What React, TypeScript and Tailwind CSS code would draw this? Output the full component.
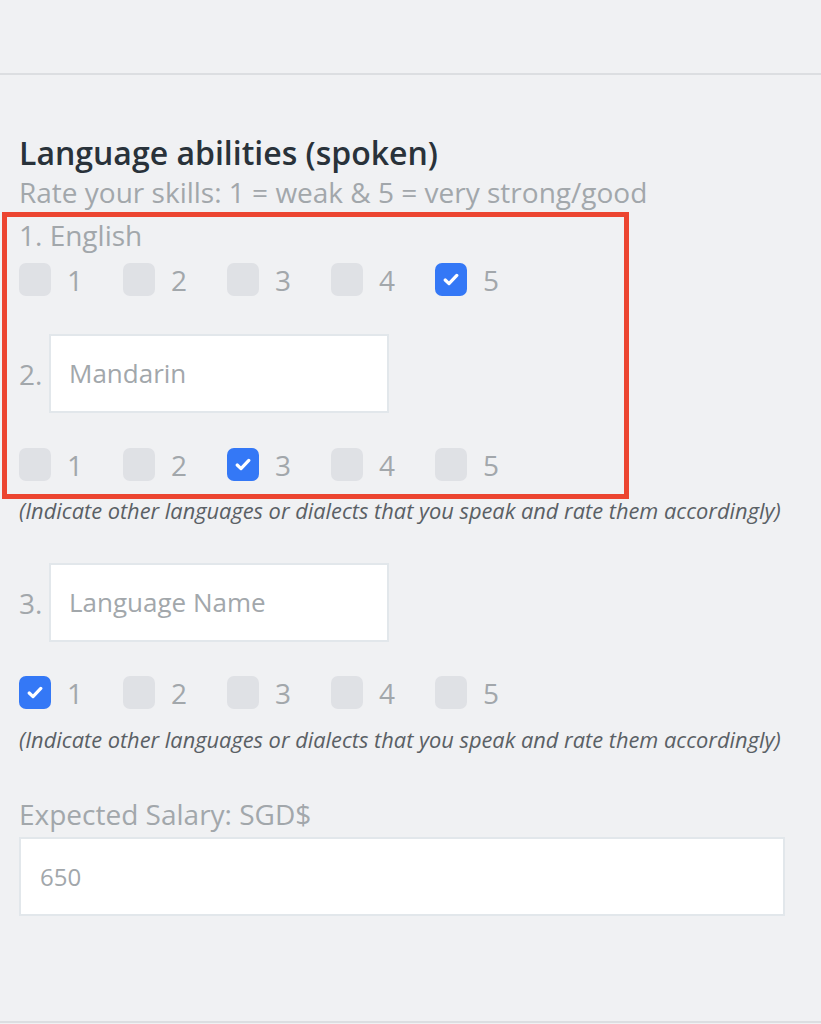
const font = "font-['Open_Sans',sans-serif]"

function Check() {
  return (
    <svg width="16" height="13" viewBox="0 0 16 13" fill="none">
      <path d="M2.2 7 L6 10.6 L13.8 2.4" stroke="white" strokeWidth="3.2" strokeLinecap="round" strokeLinejoin="round" />
    </svg>
  )
}

function Rating({ value }: { value: number }) {
  return (
    <div className="flex items-center">
      {[1, 2, 3, 4, 5].map((n) => (
        <div key={n} className="flex w-[104px] items-center gap-[16px]">
          {n === value ? (
            <div className="flex h-[33px] w-[32px] items-center justify-center rounded-[7px] bg-[#3478f6]">
              <Check />
            </div>
          ) : (
            <div className="h-[33px] w-[32px] rounded-[7px] bg-[#dfe1e5]" />
          )}
          <span className="text-[28px] leading-none text-[#a2a7ab]">{n}</span>
        </div>
      ))}
    </div>
  )
}

function NamedInput({ num, placeholder }: { num: string; placeholder: string }) {
  return (
    <div className="flex items-center gap-[7px]">
      <span className="w-[23px] text-[28px] text-[#a2a7ab]">{num}</span>
      <div className="flex h-[79px] w-[340px] items-center border-2 border-[#e2e7eb] bg-white pl-[18px]">
        <span className="text-[26px] text-[#a2a7ab]">{placeholder}</span>
      </div>
    </div>
  )
}

function Note() {
  return (
    <p className="whitespace-nowrap text-[21.8px] italic leading-[30px] text-[#5a6065]">
      (Indicate other languages or dialects that you speak and rate them accordingly)
    </p>
  )
}

export default function App() {
  return (
    <div className={`${font} relative min-h-[1024px] w-full overflow-hidden bg-[#f0f1f3]`}>
      <div className="h-[75px] border-b-2 border-[#dcdee1]" />

      <div className="flex flex-col pl-[19px] pr-[30px] pb-[105px]">
        <h2 className="mt-[60px] text-[32px] font-semibold leading-[36px] text-[#29323a]">
          Language abilities (spoken)
        </h2>
        <p className="mt-[3px] text-[28px] leading-[36px] text-[#a2a7ab]">
          Rate your skills: 1 = weak &amp; 5 = very strong/good
        </p>

        <p className="mt-[7px] text-[28px] leading-[36px] text-[#a2a7ab]">1. English</p>
        <div className="mt-[10px]">
          <Rating value={5} />
        </div>

        <div className="mt-[38px]">
          <NamedInput num="2." placeholder="Mandarin" />
        </div>
        <div className="mt-[35px]">
          <Rating value={3} />
        </div>
        <div className="mt-[15px]">
          <Note />
        </div>

        <div className="mt-[37px]">
          <NamedInput num="3." placeholder="Language Name" />
        </div>
        <div className="mt-[34px]">
          <Rating value={1} />
        </div>
        <div className="mt-[16px]">
          <Note />
        </div>

        <p className="mt-[41px] text-[28px] leading-[36px] text-[#a2a7ab]">Expected Salary: SGD$</p>
        <div className="mt-[5px] flex h-[79px] w-[766px] items-center border-2 border-[#e2e7eb] bg-white pl-[19px]">
          <span className="text-[24px] text-[#a2a7ab]">650</span>
        </div>
      </div>

      <div className="border-b-2 border-[#dcdee1]" />

      {/* highlight annotation */}
      <div className="pointer-events-none absolute left-[2px] top-[212px] h-[287px] w-[627px] border-[5px] border-[#ec4530]" />
    </div>
  )
}
